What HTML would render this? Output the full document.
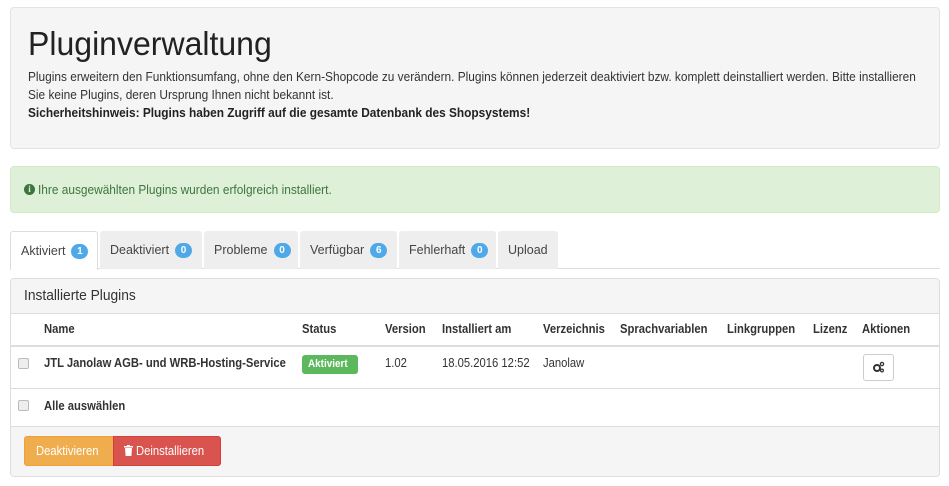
<!DOCTYPE html>
<html><head><meta charset="utf-8"><style>
*{box-sizing:border-box;margin:0;padding:0}
body{width:949px;height:486px;background:#fff;font-family:"Liberation Sans",sans-serif;color:#333;position:relative;overflow:hidden}
.a{position:absolute;white-space:nowrap}
.s{transform:scaleX(.9);transform-origin:0 50%}
.t{transform:scaleX(.95);transform-origin:0 50%}
.box{position:absolute}
.badge{display:inline-block;background:#4fa8e8;color:#fff;border-radius:9px;font-size:10px;font-weight:bold;width:17px;height:15px;line-height:15px;text-align:center;vertical-align:1px;margin-left:6px}
.tab{position:absolute;top:231px;height:38px;background:#eee;border-radius:3px 3px 0 0;font-size:12.5px;line-height:38px;padding-left:10px;color:#444}
.cb{position:absolute;width:11px;height:11px;border:1px solid #bbb;border-radius:2px;background:#eee}
</style></head><body>
<div class="box" style="left:10px;top:7px;width:930px;height:142px;background:#f5f5f5;border:1px solid #e3e3e3;border-radius:4px"></div>
<div class="a" style="left:28px;top:24px;font-size:33px;line-height:40px;color:#222;transform:scaleX(.97);transform-origin:0 50%">Pluginverwaltung</div>
<div class="a t" style="left:28px;top:69px;font-size:12.5px;line-height:16px;color:#333">Plugins erweitern den Funktionsumfang, ohne den Kern-Shopcode zu verändern. Plugins können jederzeit deaktiviert bzw. komplett deinstalliert werden. Bitte installieren</div>
<div class="a t" style="left:28px;top:87px;font-size:12.5px;line-height:16px">Sie keine Plugins, deren Ursprung Ihnen nicht bekannt ist.</div>
<div class="a t" style="left:28px;top:105px;font-size:12.5px;line-height:16px;font-weight:bold;color:#222">Sicherheitshinweis: Plugins haben Zugriff auf die gesamte Datenbank des Shopsystems!</div>

<div class="box" style="left:10px;top:166px;width:930px;height:47px;background:#dff0d8;border:1px solid #d6e9c6;border-radius:4px"></div>
<div class="box" style="left:24px;top:184px;width:11px;height:11px;border-radius:50%;background:#3c763d;color:#dff0d8;font-size:9px;line-height:11px;text-align:center;font-weight:bold;font-family:'Liberation Serif',serif">i</div>
<div class="a t" style="left:38px;top:182px;font-size:12.5px;line-height:16px;color:#3c763d">Ihre ausgewählten Plugins wurden erfolgreich installiert.</div>

<div class="box" style="left:10px;top:268px;width:930px;height:1px;background:#ddd"></div>
<div class="tab" style="left:10px;width:88px;background:#fff;border:1px solid #ddd;border-bottom:none;height:39px">Aktiviert<span class="badge">1</span></div>
<div class="tab" style="left:100px;width:102px">Deaktiviert<span class="badge">0</span></div>
<div class="tab" style="left:204px;width:94px">Probleme<span class="badge">0</span></div>
<div class="tab" style="left:300px;width:97px">Verfügbar<span class="badge">6</span></div>
<div class="tab" style="left:399px;width:97px">Fehlerhaft<span class="badge">0</span></div>
<div class="tab" style="left:498px;width:60px">Upload</div>

<div class="box" style="left:10px;top:278px;width:930px;height:199px;border:1px solid #ddd;border-radius:4px;background:#fff;overflow:hidden">
 <div style="height:35px;background:#f5f5f5;border-bottom:1px solid #ddd"></div>
 <div style="position:absolute;top:66px;left:0;right:0;height:2px;background:#ddd"></div>
 <div style="position:absolute;top:109px;left:0;right:0;height:1px;background:#ddd"></div>
 <div style="position:absolute;top:147px;left:0;right:0;bottom:0;background:#f5f5f5;border-top:1px solid #ddd"></div>
</div>
<div class="a t" style="left:24px;top:288px;font-size:14.5px;line-height:17px;color:#333">Installierte Plugins</div>
<div class="a s" style="top:322px;font-size:12.5px;font-weight:bold;line-height:15px;left:44px">Name</div>
<div class="a s" style="top:322px;font-size:12.5px;font-weight:bold;line-height:15px;left:302px">Status</div>
<div class="a s" style="top:322px;font-size:12.5px;font-weight:bold;line-height:15px;left:385px">Version</div>
<div class="a s" style="top:322px;font-size:12.5px;font-weight:bold;line-height:15px;left:442px">Installiert am</div>
<div class="a s" style="top:322px;font-size:12.5px;font-weight:bold;line-height:15px;left:543px">Verzeichnis</div>
<div class="a s" style="top:322px;font-size:12.5px;font-weight:bold;line-height:15px;left:620px">Sprachvariablen</div>
<div class="a s" style="top:322px;font-size:12.5px;font-weight:bold;line-height:15px;left:727px">Linkgruppen</div>
<div class="a s" style="top:322px;font-size:12.5px;font-weight:bold;line-height:15px;left:813px">Lizenz</div>
<div class="a s" style="top:322px;font-size:12.5px;font-weight:bold;line-height:15px;left:862px">Aktionen</div>

<div class="cb" style="left:18px;top:358px"></div>
<div class="a s" style="top:356px;font-size:12.5px;font-weight:bold;line-height:15px;left:44px">JTL Janolaw AGB- und WRB-Hosting-Service</div>
<div class="box" style="left:302px;top:355px;width:56px;height:19px;background:#5cb85c;border-radius:3px"></div>
<div class="a s" style="top:358px;font-size:11px;font-weight:bold;line-height:13px;left:308px;color:#fff">Aktiviert</div>
<div class="a s" style="top:356px;font-size:12.5px;line-height:15px;left:385px">1.02</div>
<div class="a s" style="top:356px;font-size:12.5px;line-height:15px;left:442px">18.05.2016 12:52</div>
<div class="a s" style="top:356px;font-size:12.5px;line-height:15px;left:543px">Janolaw</div>
<div class="box" style="left:863px;top:354px;width:31px;height:27px;border:1px solid #ccc;border-radius:3px;background:#fff"></div>
<svg class="box" style="left:872px;top:361px" width="13" height="12" viewBox="0 0 13 12"><circle cx="5" cy="7" r="3" fill="none" stroke="#333" stroke-width="2"/><circle cx="10" cy="3" r="1.6" fill="none" stroke="#333" stroke-width="1.3"/><circle cx="10" cy="9.5" r="1.4" fill="none" stroke="#333" stroke-width="1.2"/></svg>

<div class="cb" style="left:18px;top:400px"></div>
<div class="a s" style="top:399px;font-size:12.5px;font-weight:bold;line-height:15px;left:44px">Alle auswählen</div>

<div class="box" style="left:24px;top:436px;width:90px;height:30px;background:#f0ad4e;border:1px solid #eea236;border-radius:3px 0 0 3px"></div>
<div class="a s" style="top:444px;font-size:12.5px;line-height:15px;left:36px;color:#fff">Deaktivieren</div>
<div class="box" style="left:113px;top:436px;width:108px;height:30px;background:#d9534f;border:1px solid #d43f3a;border-radius:0 3px 3px 0"></div>
<svg class="box" style="left:124px;top:445px" width="9" height="11" viewBox="0 0 9 11"><rect x="0" y="1" width="9" height="1.5" fill="#fff"/><rect x="3" y="0" width="3" height="1.5" fill="#fff"/><path d="M1 3h7l-.6 8H1.6z" fill="#fff"/></svg>
<div class="a s" style="top:444px;font-size:12.5px;line-height:15px;left:136px;color:#fff">Deinstallieren</div>
</body></html>
